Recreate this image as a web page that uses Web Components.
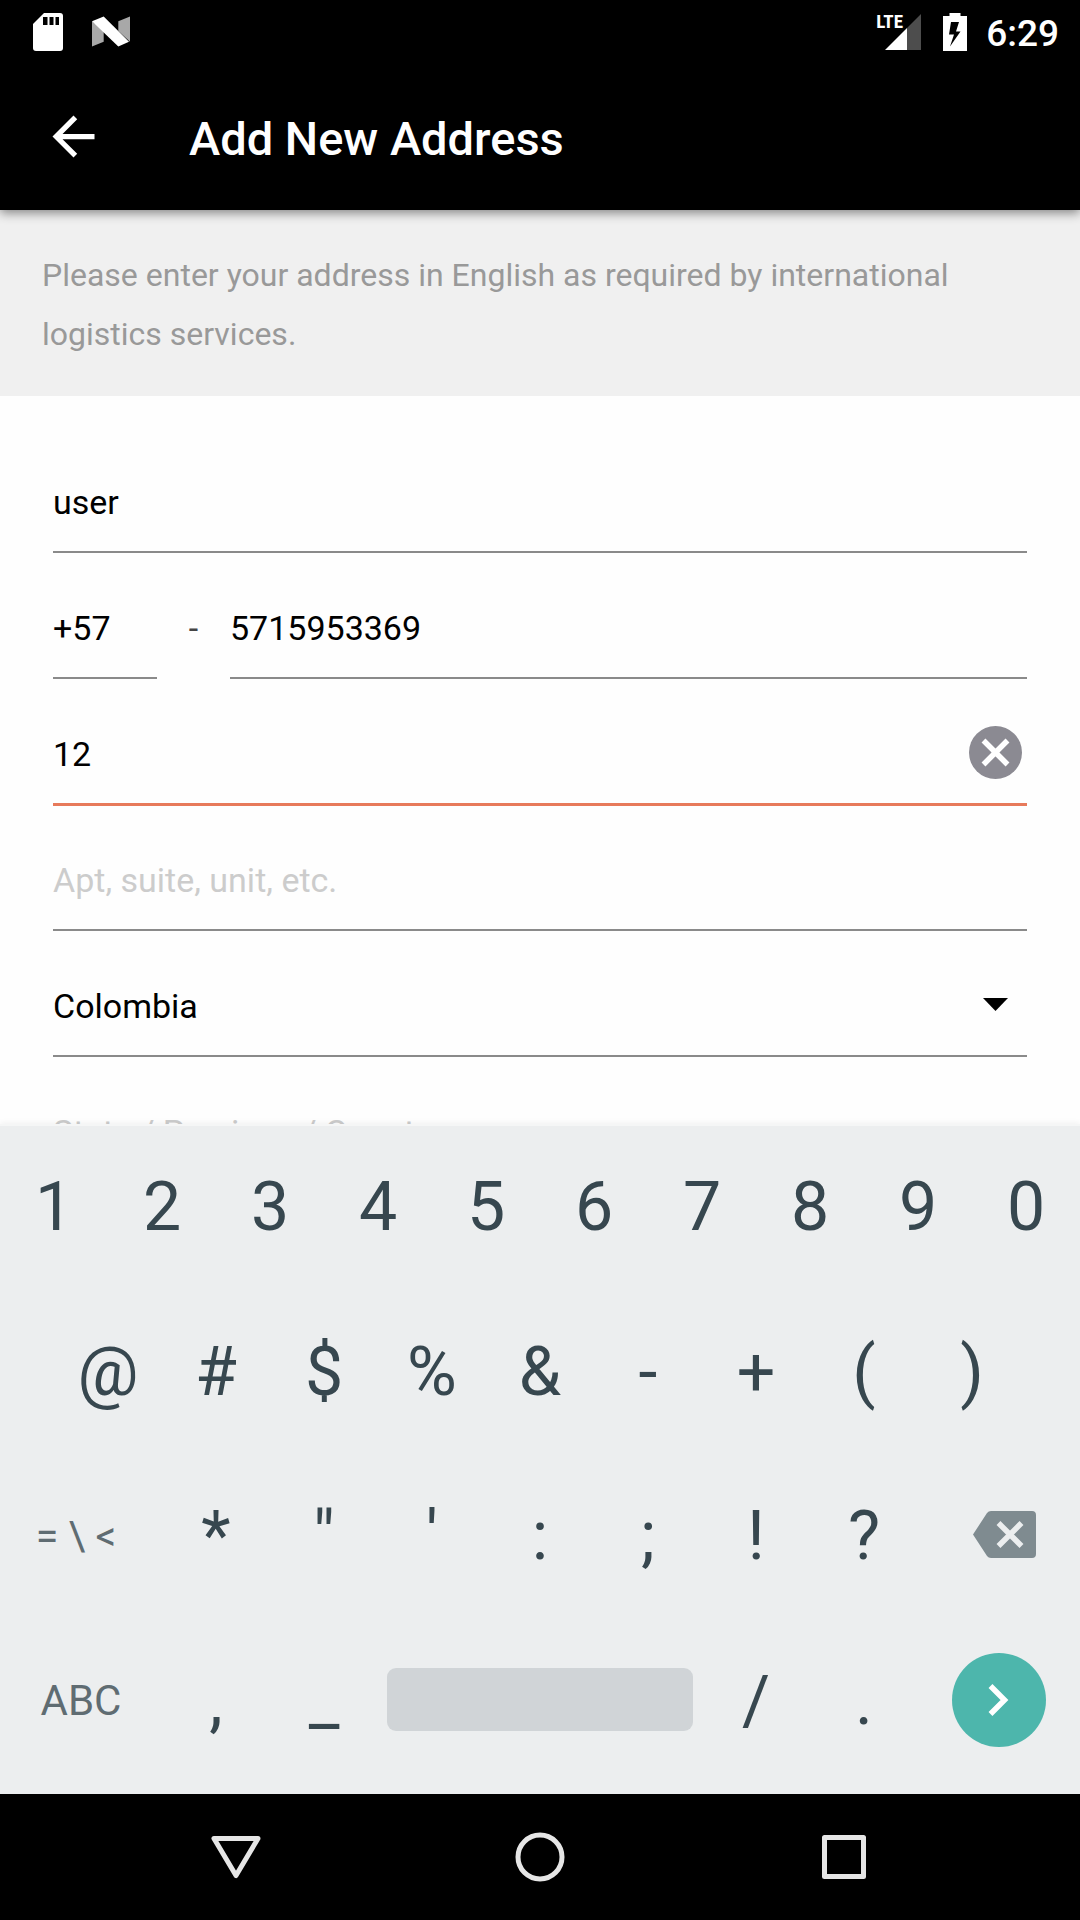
<!DOCTYPE html>
<html lang="en">
<head>
<meta charset="utf-8">
<meta name="viewport" content="width=device-width, initial-scale=1">
<title>Add New Address</title>
<style>
  html, body { margin: 0; height: 100%; }
  body { font-family: Roboto, "Liberation Sans", sans-serif; background: #fefefe; color: #000; }
</style>
</head>
<body>
<address-screen></address-screen>

<script>
const define = (name, html, setup) => {
  const template = document.createElement('template');
  template.innerHTML = `<style>
    *, *::before, *::after { box-sizing: border-box; }
    button { font: inherit; color: inherit; background: none; border: 0; padding: 0; margin: 0; cursor: pointer; }
    svg { display: block; flex: none; }
  </style>` + html;
  customElements.define(name, class extends HTMLElement {
    constructor() {
      super();
      this.attachShadow({ mode: 'open' }).append(template.content.cloneNode(true));
    }
    connectedCallback() {
      if (setup && !this.ready) { this.ready = true; setup(this, this.shadowRoot); }
    }
  });
};

define('status-bar', `
  <style>
    :host { display: flex; justify-content: space-between; align-items: center; height: 63px; padding: 0 21px 0 32px; background: #000; color: #fff; }
    .group { display: flex; align-items: center; }
    .notices { gap: 28px; }
    .system { gap: 22px; }
    .signal { position: relative; margin-left: 9px; }
    .signal span { position: absolute; left: -9px; top: -3px; font: 700 19px/22px "Liberation Sans Narrow", "Roboto Condensed", Roboto, sans-serif; }
    time { font-size: 37px; font-weight: 500; line-height: 44px; padding-top: 4px; margin-left: -3px; }
  </style>
  <div class="group notices">
    <svg width="32" height="38" viewBox="0 0 32 38" role="img" aria-label="SD card">
      <path fill="#fff" d="M12 0H28a3 3 0 0 1 3 3V35a3 3 0 0 1-3 3H4a3 3 0 0 1-3-3V11Z"/>
      <path fill="#000" d="M11 4h4.500v8H11zM17.500 4h4v8h-4zM23.500 4h3.500v8h-3.500z"/>
    </svg>
    <svg width="38" height="31" viewBox="0 0 39 31" role="img" aria-label="Android system">
      <path fill="#a8a8a8" d="M0 5V31L12 26V14ZM27 5L39 0V26L27 15Z"/>
      <path fill="#fff" d="M0 5L12 0L38 26L27 31Z"/>
    </svg>
  </div>
  <div class="group system">
    <div class="signal">
      <svg width="36" height="36" viewBox="0 0 36 36" aria-hidden="true">
        <path fill="#4d4d4d" d="M36 0V36H22V14Z"/><path fill="#fff" d="M0 36L22 14V36Z"/>
      </svg>
      <span>LTE</span>
    </div>
    <svg width="24" height="38" viewBox="0 0 24 38" role="img" aria-label="Battery charging">
      <path fill="#fff" d="M6.500 0H17.500V3H24V38H0V3H6.500Z"/>
      <path fill="#000" d="M8 9H16L13 18.500H17.500L7 33.500L11 21.500H6Z"/>
    </svg>
    <time>6:29</time>
  </div>`);

define('app-bar', `
  <style>
    :host { display: flex; align-items: center; height: 147px; padding: 0 42px; gap: 84px; background: #000; color: #fff; position: relative; z-index: 1; box-shadow: 0 3px 10px rgba(0,0,0,.45); }
    h1 { margin: 0; padding-top: 4px; font-size: 47px; font-weight: 500; line-height: 56px; }
  </style>
  <button type="button" aria-label="Back">
    <svg width="63" height="63" viewBox="0 0 24 24"><path fill="#fff" d="M20 11H7.830l5.590-5.590L12 4l-8 8 8 8 1.410-1.410L7.830 13H20v-2z"/></svg>
  </button>
  <h1><slot></slot></h1>`);

define('notice-banner', `
  <style>
    :host { display: block; padding: 36px 42px 32px; background: #f0f0f0; color: #999; }
    p { margin: 0; font-size: 32px; line-height: 59px; }
  </style>
  <p><slot></slot></p>`);

/* One underlined form line: slotted control, optional trailing icon. */
define('form-line', `
  <style>
    :host { display: block; min-width: 0; padding-top: 22px; }
    .control { display: flex; align-items: center; height: 100px; padding: 0 5px 2px 0; }
    .rule { height: 4px; }
    .rule::before { content: ""; display: block; height: 2px; background: #8a8a8a; }
    :host([active]) .rule::before { height: 3px; background: #e77a5b; }
    ::slotted(input), ::slotted(select) {
      flex: 1; min-width: 0; width: 100%; height: 98px; margin: 0; padding: 4px 0 0; border: 0; border-radius: 0; outline: 0;
      background: transparent; appearance: none; font: 34px/40px Roboto, "Liberation Sans", sans-serif; color: #000; opacity: 1;
    }
  </style>
  <div class="control"><slot></slot><slot name="end"></slot></div>
  <div class="rule"></div>`);

define('address-form', `
  <style>
    :host { display: block; padding: 33px 53px 0; background: #fefefe; }
    input::placeholder { color: #ccc; opacity: 1; }
    .phone { display: grid; grid-template-columns: 104px 73px 1fr; }
    .dash { padding-top: 23px; line-height: 100px; font-size: 34px; text-align: center; color: #444; }
    .caret { margin-right: 14px; pointer-events: none; }
    .clear { display: block; flex: none; }
  </style>
  <form-line><input type="text" aria-label="Contact name" value="user"></form-line>
  <div class="phone">
    <form-line><input type="text" aria-label="Country code" value="+57"></form-line>
    <span class="dash">-</span>
    <form-line><input type="tel" aria-label="Phone number" value="5715953369"></form-line>
  </div>
  <form-line active>
    <input type="text" aria-label="Street address" value="12">
    <button class="clear" slot="end" type="button" aria-label="Clear">
      <svg width="53" height="53" viewBox="0 0 53 53"><circle cx="26.500" cy="26.500" r="26.500" fill="#8b8a92"/><path d="M14.500 14.500L38.500 38.500M38.500 14.500L14.500 38.500" stroke="#fff" stroke-width="5.500"/></svg>
    </button>
  </form-line>
  <form-line><input type="text" aria-label="Apartment" placeholder="Apt, suite, unit, etc."></form-line>
  <form-line>
    <select aria-label="Country"><option>Colombia</option></select>
    <svg class="caret" slot="end" width="25" height="13" viewBox="0 0 25 13" aria-hidden="true"><path d="M0 0H25L12.500 13Z"/></svg>
  </form-line>
  <form-line><input type="text" aria-label="State" placeholder="State / Province / County"></form-line>`);

define('soft-key', `
  <style>
    :host { display: block; flex: 2 1 0; min-width: 0; font-size: 68px; color: #37474f; }
    :host([wide]) { flex-grow: 3; }
    :host([kind="mode"]) { font-size: 42px; color: #5f6c72; }
    :host([kind="symbols"]) { font-size: 41px; color: #5f6c72; }
    :host([kind="space"]) { flex-grow: 6; }
    button { display: flex; align-items: center; justify-content: center; width: 100%; height: 100%; line-height: 80px; white-space: pre; }
    :host(:not([label])) button { padding-top: 2px; }
    :host([kind="symbols"]) button { padding-right: 10px; }
    :host([kind="delete"]) button { padding: 0 0 2px 10px; }
  </style>
  <button type="button"><slot></slot></button>`,
  (host, root) => {
    if (host.hasAttribute('label')) root.querySelector('button').setAttribute('aria-label', host.getAttribute('label'));
  });

define('soft-keyboard', `
  <style>
    :host { display: grid; grid-template-rows: repeat(4, 1fr); height: 670px; padding-bottom: 12px; position: relative;
      background: linear-gradient(#f5f6f6 2px, #eceeef 2px); box-shadow: 0 -1px 6px rgba(0,0,0,.06); }
    .row { display: flex; }
    .inset { padding: 0 5%; }
    .bar { display: block; width: 100%; height: 63px; margin: 0 9px; border-radius: 9px; background: #d0d4d7; }
  </style>
  <div class="row">${[...'1234567890'].map(k => `<soft-key>${k}</soft-key>`).join('')}</div>
  <div class="row inset">${['@', '#', '$', '%', '&amp;', '-', '+', '(', ')'].map(k => `<soft-key>${k}</soft-key>`).join('')}</div>
  <div class="row">
    <soft-key wide kind="symbols">= \\ &lt;</soft-key>
    ${[...`*"':;!?`].map(k => `<soft-key>${k}</soft-key>`).join('')}
    <soft-key wide kind="delete" label="Delete">
      <svg width="63" height="47" viewBox="0 0 63 47"><path fill="#7f8b90" d="M18 0H59a4 4 0 0 1 4 4V43a4 4 0 0 1-4 4H18a5 5 0 0 1-4-2L0 23.500L14 2a5 5 0 0 1 4-2Z"/><path d="M25.500 12L48.500 35M48.500 12L25.500 35" stroke="#eceeef" stroke-width="5.500"/></svg>
    </soft-key>
  </div>
  <div class="row">
    <soft-key wide kind="mode">ABC</soft-key><soft-key>,</soft-key><soft-key>_</soft-key>
    <soft-key kind="space" label="Space"><span class="bar"></span></soft-key>
    <soft-key>/</soft-key><soft-key>.</soft-key>
    <soft-key wide label="Next">
      <svg width="94" height="94" viewBox="0 0 94 94"><circle cx="47" cy="47" r="47" fill="#4db6ac"/><path d="M38.500 33L52.500 47L38.500 61" fill="none" stroke="#fff" stroke-width="5.500"/></svg>
    </soft-key>
  </div>`);

define('nav-bar', `
  <style>
    :host { display: block; background: #000; }
    nav { display: flex; height: 126px; padding: 0 84px; }
    button { flex: 1; display: flex; align-items: center; justify-content: center; }
    svg { fill: none; stroke: #e6e6e6; stroke-width: 5; stroke-linejoin: round; }
  </style>
  <nav>
    <button type="button" aria-label="Back"><svg width="50" height="50" viewBox="0 0 50 50"><path d="M3 6.500H47L25 43.500Z"/></svg></button>
    <button type="button" aria-label="Home"><svg width="50" height="50" viewBox="0 0 50 50"><circle cx="25" cy="25" r="22"/></svg></button>
    <button type="button" aria-label="Overview"><svg width="50" height="50" viewBox="0 0 50 50"><rect x="5.500" y="5.500" width="39" height="39"/></svg></button>
  </nav>`);

define('address-screen', `
  <style>
    :host { display: flex; flex-direction: column; height: 100vh; overflow: hidden; }
    status-bar, app-bar, notice-banner, soft-keyboard, nav-bar { flex: none; }
    address-form { flex: 1; min-height: 0; overflow: hidden; }
  </style>
  <status-bar></status-bar>
  <app-bar>Add New Address</app-bar>
  <notice-banner>Please enter your address in English as required by international logistics services.</notice-banner>
  <address-form></address-form>
  <soft-keyboard></soft-keyboard>
  <nav-bar></nav-bar>`);
</script>
</body>
</html>
